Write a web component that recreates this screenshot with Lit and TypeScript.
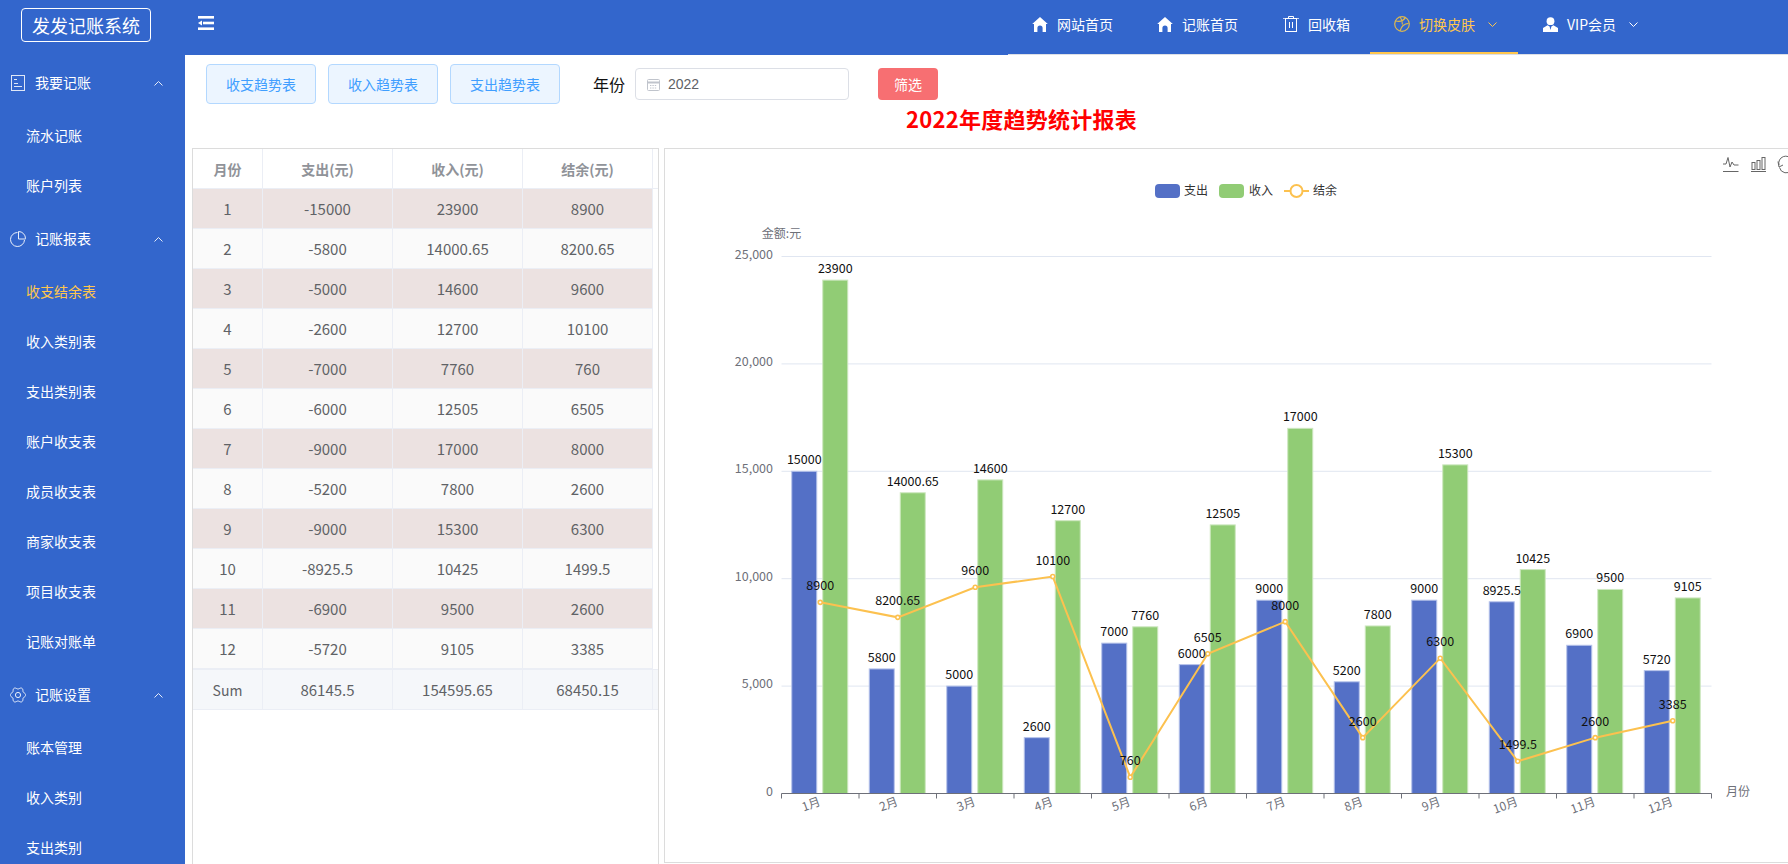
import { LitElement, html, css, svg } from "lit";
import { customElement } from "lit/decorators.js";

const exp = [15000, 5800, 5000, 2600, 7000, 6000, 9000, 5200, 9000, 8925.5, 6900, 5720];
const inc = [23900, 14000.65, 14600, 12700, 7760, 12505, 17000, 7800, 15300, 10425, 9500, 9105];
const bal = [8900, 8200.65, 9600, 10100, 760, 6505, 8000, 2600, 6300, 1499.5, 2600, 3385];

const OX = 665, OY = 149;
const AX = 781.5, AW = 930, Y0 = 793.5, YH = 537;
const px = (x: number) => x - OX;
const py = (v: number) => Y0 - OY - (v / 25000) * YH;
const catW = AW / 12;
const cx = (i: number) => AX - OX + catW * (i + 0.5);

const gearPath = (() => {
  const pts: string[] = [];
  for (let i = 0; i < 72; i++) {
    const t = (i / 72) * Math.PI * 2;
    const r = 6.9 + 0.9 * Math.cos(6 * t + Math.PI);
    pts.push(`${(8 + r * Math.sin(t)).toFixed(2)} ${(8 - r * Math.cos(t)).toFixed(2)}`);
  }
  return "M" + pts.join("L") + "Z";
})();

const homeIcon = html`<svg class="ic home" width="16" height="15" viewBox="0 0 16 15"><path fill="#fff" d="M8 0 L15.8 7 L14 7 L14 15 L10.6 15 L10.6 11 A2.6 2.6 0 0 0 5.4 11 L5.4 15 L2 15 L2 7 L0.2 7 Z"/></svg>`;
const trashIcon = html`<svg class="ic" width="16" height="16" viewBox="0 0 16 16" fill="none" stroke="#fff" stroke-width="1"><path d="M0 2.5H16" stroke="#c9d6f2"/><path d="M5.5 2.5V0.5H10.5V2.5"/><rect x="2.5" y="2.5" width="11" height="13"/><path d="M6.5 6V12M9.5 6V12"/></svg>`;
const ballIcon = html`<svg class="ic" width="16" height="16" viewBox="0 0 16 16" fill="none" stroke="#dcb850" stroke-width="1.2"><circle cx="8" cy="8" r="7.3"/><path d="M1.6 5C5.6 6 9.4 5 11.4 1.4"/><path d="M14.6 7.4C10.4 7.6 7.4 10 6 15"/><path d="M6.2 1C7.6 3 8.4 5.4 8.4 8.6"/></svg>`;
const userIcon = html`<svg class="ic" width="15" height="15" viewBox="0 0 15 15"><circle cx="7.5" cy="4.2" r="3.9" fill="#fff"/><path fill="#fff" d="M4.6 8.2 L6.6 9.4 L7.5 13 L8.4 9.4 L10.4 8.2 L15 11 L15 15 L0 15 L0 11 Z"/></svg>`;
const chevDown = (c: string) => html`<svg class="chev" width="9" height="5" viewBox="0 0 9 5" fill="none" stroke=${c} stroke-width="1"><path d="M0.5 0.5L4.5 4.5L8.5 0.5"/></svg>`;
const chevUp = html`<svg class="chev-up" width="9" height="5" viewBox="0 0 9 5" fill="none" stroke="#e4ebf8" stroke-width="1"><path d="M0.5 4.5L4.5 0.5L8.5 4.5"/></svg>`;

const docIcon = html`<svg width="16" height="16" viewBox="0 0 16 16" fill="none" stroke="#dfe7f7" stroke-width="1"><rect x="1.5" y="0.5" width="13" height="15"/><path d="M4 4.5H7M4 8.5H8M4 11.5H12" stroke-width="1.2"/></svg>`;
const pieIcon = html`<svg width="16" height="16" viewBox="0 0 16 16" fill="none" stroke="#e9effa" stroke-width="1"><path d="M7.5 1.5A7 7 0 1 0 14.5 9"/><path d="M8.5 0.5A7 7 0 0 1 15.5 7.5V8H8.5Z"/></svg>`;
const gearIcon = html`<svg width="16" height="16" viewBox="0 0 16 16" fill="none" stroke="#e9effa" stroke-width="1"><path d=${gearPath}/><circle cx="8" cy="8" r="2.6"/></svg>`;

const menu = [
  { title: "我要记账", icon: docIcon, items: ["流水记账", "账户列表"] },
  { title: "记账报表", icon: pieIcon, items: ["收支结余表", "收入类别表", "支出类别表", "账户收支表", "成员收支表", "商家收支表", "项目收支表", "记账对账单"] },
  { title: "记账设置", icon: gearIcon, items: ["账本管理", "收入类别", "支出类别"] },
];

@customElement("app-root")
export class AppRoot extends LitElement {
  static styles = css`
    :host { display: block; width: 100%; height: 864px; overflow: hidden; background: #fff; font-family: "Noto Sans CJK SC", sans-serif; font-size: 14px; }
    .header { display: flex; height: 55px; background: #3366cc; color: #fff; }
    .logo { margin: 8px 0 0 21px; width: 130px; height: 34px; box-sizing: border-box; border: 1px solid #fff; border-radius: 4px; display: flex; align-items: center; justify-content: center; font-size: 18px; line-height: 1; }
    .fold { margin: 16px 0 0 47px; }
    .nav { margin-left: auto; width: 780px; height: 55px; box-sizing: border-box; border-bottom: 1px solid #dcdfe6; display: flex; padding-left: 5px; }
    .item { height: 54px; box-sizing: border-box; border-bottom: 2px solid transparent; padding: 0 20px 4px; display: flex; align-items: center; gap: 9px; white-space: nowrap; }
    .item.sp { margin-left: 5px; }
    .item.sub { padding: 0 21px 4px 24px; }
    .item.last { margin-left: 1px; }
    .item.active { border-bottom-color: #ffc64d; color: #ffc64d; }
    .ic { flex: none; display: block; }
    .home { margin-left: -1px; }
    .chev { margin-left: 4px; flex: none; display: block; }
    .layout { display: flex; height: 809px; }
    .side { width: 185px; flex: none; background: #3366cc; color: #fff; overflow: hidden; }
    .gtitle { height: 56px; display: flex; align-items: center; padding: 0 22px 0 10px; gap: 9px; }
    .gtitle svg { display: block; flex: none; }
    .gtitle span { padding-bottom: 2px; }
    .chev-up { margin-left: auto; }
    .sitem { height: 50px; box-sizing: border-box; display: flex; align-items: center; padding: 0 0 2px 26px; }
    .sitem.active { color: #ffc64d; }
    .main { flex: 1; min-width: 0; overflow: hidden; }
    .filters { display: flex; align-items: center; height: 40px; padding: 9px 0 0 21px; }
    .btn { width: 110px; height: 40px; box-sizing: border-box; margin-right: 12px; display: flex; align-items: center; justify-content: center; border: 1px solid #b3d8ff; border-radius: 4px; background: #ecf5ff; color: #409eff; }
    .yl { margin-left: 21px; font-size: 16px; color: #111; width: 42px; }
    .date { width: 214px; height: 32px; box-sizing: border-box; border: 1px solid #dcdfe6; border-radius: 4px; display: flex; align-items: center; padding-left: 11px; gap: 8px; color: #606266; font-family: "Liberation Sans", sans-serif; }
    .date svg { display: block; }
    .go { margin-left: 29px; width: 60px; height: 32px; border-radius: 4px; background: #f76f72; color: #fff; display: flex; align-items: center; justify-content: center; }
    .title { margin-left: 721px; height: 28px; line-height: 28px; font-size: 22px; letter-spacing: 0.25px; font-weight: 700; color: #f00; margin-bottom: 16px; white-space: nowrap; }
    .panels { display: flex; gap: 5px; margin-left: 7px; }
    .tp { width: 467px; height: 716px; flex: none; box-sizing: border-box; border: 1px solid #dcdcdc; border-bottom: none; }
    table { border-collapse: separate; border-spacing: 0; table-layout: fixed; width: 465px; color: #606266; }
    col.c1 { width: 70px; } col.c { width: 130px; } col.g { width: 5px; }
    th, td { height: 40px; box-sizing: border-box; padding: 0; text-align: center; border-right: 1px solid #ebeef5; border-bottom: 1px solid #ebeef5; font-size: 15px; }
    th { color: #909399; font-weight: 700; background: #fff; font-size: 14px; }
    tr.odd td { background: #ece2e1; }
    tr.even td { background: #fafafa; }
    td.gut { background: #fff !important; border: none; }
    th.gutter { border-right: none; }
    tr.sum td { height: 41px; border-top: 1px solid #ebeef5; background: #f5f7fa; }
    tr.sum td.s { font-size: 14px; }
    tr.sum td.gs { border-right: none; }
    .cp { flex: none; width: 1200px; height: 715px; box-sizing: border-box; border: 1px solid #dcdcdc; overflow: hidden; }
    .cp svg { display: block; font-family: "Noto Sans CJK SC", sans-serif; font-size: 12px; }
    .num { font-size: 12.5px; }
  `;

  chart() {
    const grid = [0, 5000, 10000, 15000, 20000, 25000];
    const ticks = Array.from({ length: 13 }, (_, i) => px(AX) + catW * i);
    return html`<svg width="1198" height="713" viewBox="0 0 1198 713">
      ${grid.slice(1).map((v) => svg`<line x1=${px(AX)} x2=${px(AX) + AW} y1=${py(v)} y2=${py(v)} stroke="#e0e6f1"/>`)}
      ${grid.map((v) => svg`<text class="num" x=${px(773)} y=${py(v) + 2} text-anchor="end" fill="#6e7079">${v.toLocaleString("en-US")}</text>`)}
      <text x=${px(AX)} y=${237.5 - OY} text-anchor="middle" fill="#6e7079">金额:元</text>
      <text x=${px(1726)} y=${796 - OY} fill="#6e7079">月份</text>
      ${exp.map((v, i) => { const y = py(v); return svg`<rect x=${cx(i) - 28.5} y=${y} width="25" height=${py(0) - y} fill="#5470c6" stroke="#b6c3ea"/>`; })}
      ${inc.map((v, i) => { const y = py(v); return svg`<rect x=${cx(i) + 2.5} y=${y} width="25" height=${py(0) - y} fill="#91cc75" stroke="#cde7bf"/>`; })}
      <line x1=${px(AX)} x2=${px(AX) + AW} y1=${py(0)} y2=${py(0)} stroke="#6e7079"/>
      ${ticks.map((x) => svg`<line x1=${x} x2=${x} y1=${py(0)} y2=${py(0) + 5} stroke="#6e7079"/>`)}
      ${exp.map((_, i) => svg`<text transform="translate(${cx(i) + 1} ${805 - OY}) rotate(-20)" text-anchor="end" fill="#6e7079">${i + 1}月</text>`)}
      <polyline points=${bal.map((v, i) => `${cx(i)},${py(v)}`).join(" ")} fill="none" stroke="#fcc14f" stroke-width="2"/>
      ${bal.map((v, i) => svg`<circle cx=${cx(i)} cy=${py(v)} r="2" fill="#fff" stroke="#fcc14f" stroke-width="1.6"/>`)}
      ${exp.map((v, i) => svg`<text class="num" x=${cx(i) - 16} y=${py(v) - 7} text-anchor="middle" fill="#111">${v}</text>`)}
      ${inc.map((v, i) => svg`<text class="num" x=${cx(i) + 15} y=${py(v) - 7} text-anchor="middle" fill="#111">${v}</text>`)}
      ${bal.map((v, i) => svg`<text class="num" x=${cx(i)} y=${py(v) - 12} text-anchor="middle" fill="#111">${v}</text>`)}
      <rect x=${px(1155)} y=${184 - OY} width="25" height="14" rx="4" fill="#5470c6"/>
      <text x=${px(1184)} y=${195 - OY} fill="#333">支出</text>
      <rect x=${px(1219)} y=${184 - OY} width="25" height="14" rx="4" fill="#91cc75"/>
      <text x=${px(1249)} y=${195 - OY} fill="#333">收入</text>
      <line x1=${px(1284)} x2=${px(1309)} y1=${191 - OY} y2=${191 - OY} stroke="#fcc14f" stroke-width="2"/>
      <circle cx=${px(1296.5)} cy=${191 - OY} r="6" fill="#fff" stroke="#fcc14f" stroke-width="2"/>
      <text x=${px(1313)} y=${195 - OY} fill="#333">结余</text>
      <g fill="none" stroke="#666" stroke-width="1">
        <path d="M${px(1723)} ${171.5 - OY}H${px(1738.5)}"/>
        <path d="M${px(1723)} ${164 - OY}L${px(1726)} ${164 - OY}L${px(1728)} ${157.5 - OY}L${px(1730)} ${167 - OY}L${px(1732)} ${162 - OY}L${px(1734)} ${165 - OY}H${px(1738.5)}"/>
        <path d="M${px(1751)} ${171.5 - OY}H${px(1766)}"/>
        <rect x=${px(1752)} y=${162.5 - OY} width="3" height="7"/>
        <rect x=${px(1757)} y=${160.5 - OY} width="3" height="9"/>
        <rect x=${px(1762)} y=${157.5 - OY} width="3" height="12"/>
        <path d="M${px(1792)} ${160 - OY}A7 7 0 0 0 ${px(1779)} ${165 - OY}M${px(1778)} ${161.5 - OY}L${px(1779)} ${167 - OY}L${px(1783)} ${165 - OY}"/>
        <path d="M${px(1779.5)} ${167.5 - OY}A7 7 0 0 0 ${px(1792)} ${170 - OY}"/>
      </g>
    </svg>`;
  }

  render() {
    return html`
      <div class="header">
        <div class="logo">发发记账系统</div>
        <svg class="fold" width="16" height="14" viewBox="0 0 16 14" fill="#fff"><rect width="16" height="2.6"/><rect x="5" y="5.7" width="11" height="2.6"/><path d="M0 7L4 4.4V9.6Z"/><rect y="11.4" width="16" height="2.6"/></svg>
        <div class="nav">
          <div class="item">${homeIcon}<span>网站首页</span></div>
          <div class="item sp">${homeIcon}<span>记账首页</span></div>
          <div class="item sp">${trashIcon}<span>回收箱</span></div>
          <div class="item sub active">${ballIcon}<span>切换皮肤</span>${chevDown("#ffc64d")}</div>
          <div class="item sub last">${userIcon}<span>VIP会员</span>${chevDown("#fff")}</div>
        </div>
      </div>
      <div class="layout">
        <div class="side">
          ${menu.map((g) => html`
            <div class="gtitle">${g.icon}<span>${g.title}</span>${chevUp}</div>
            ${g.items.map((t) => html`<div class="sitem ${t === "收支结余表" ? "active" : ""}">${t}</div>`)}
          `)}
        </div>
        <div class="main">
          <div class="filters">
            <div class="btn">收支趋势表</div>
            <div class="btn">收入趋势表</div>
            <div class="btn">支出趋势表</div>
            <div class="yl">年份</div>
            <div class="date">
              <svg width="13" height="13" viewBox="0 0 13 13" fill="none" stroke="#c0c4cc"><rect x="0.5" y="1.5" width="12" height="11" rx="1"/><path d="M0.5 4.5H12.5" stroke-width="2"/><path d="M3 7.5H10M3 10H10" stroke-dasharray="1.4 1"/></svg>
              <span>2022</span>
            </div>
            <div class="go">筛选</div>
          </div>
          <div class="title">2022年度趋势统计报表</div>
          <div class="panels">
            <div class="tp">
              <table>
                <colgroup><col class="c1"/><col class="c"/><col class="c"/><col class="c"/><col class="g"/></colgroup>
                <thead><tr><th>月份</th><th>支出(元)</th><th>收入(元)</th><th>结余(元)</th><th class="gutter"></th></tr></thead>
                <tbody>
                  ${exp.map((v, i) => html`<tr class=${i % 2 ? "even" : "odd"}><td>${i + 1}</td><td>-${v}</td><td>${inc[i]}</td><td>${bal[i]}</td><td class="gut"></td></tr>`)}
                  <tr class="sum"><td class="s">Sum</td><td>86145.5</td><td>154595.65</td><td>68450.15</td><td class="gs"></td></tr>
                </tbody>
              </table>
            </div>
            <div class="cp">${this.chart()}</div>
          </div>
        </div>
      </div>
    `;
  }
}
